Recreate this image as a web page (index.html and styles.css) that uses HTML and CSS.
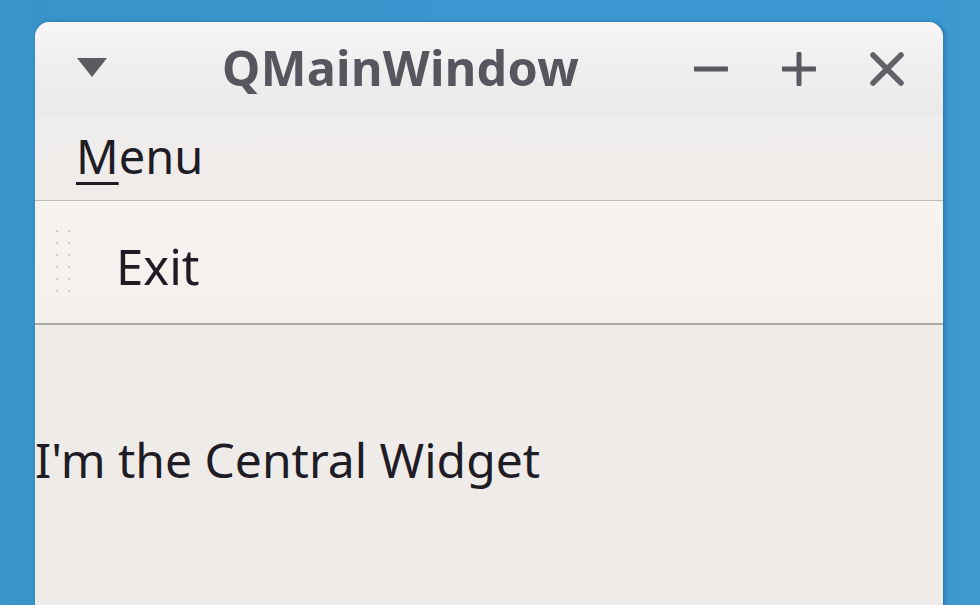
FILE: index.html
```html
<!DOCTYPE html>
<html>
<head>
<meta charset="utf-8">
<link rel="stylesheet" href="styles.css">
</head>
<body>
<div class="window">
  <div class="titlebar">
    <svg class="menu-arrow" width="30" height="19" viewBox="0 0 30 19"><path d="M0 0 H30 L15 19 Z" fill="#5b5a5f"/></svg>
    <div class="title">QMainWindow</div>
    <div class="buttons">
      <svg class="btn" width="34" height="34" viewBox="0 0 34 34"><path d="M1 17 H33" stroke="#5b5960" stroke-width="5" stroke-linecap="round"/></svg>
      <svg class="btn" width="34" height="34" viewBox="0 0 34 34"><path d="M1 17 H33 M17 2 V32" stroke="#5b5960" stroke-width="5" stroke-linecap="round"/></svg>
      <svg class="btn" width="34" height="34" viewBox="0 0 34 34"><path d="M3 3 L31 31 M31 3 L3 31" stroke="#636167" stroke-width="5.5" stroke-linecap="round"/></svg>
    </div>
  </div>
  <div class="menubar">
    <span class="menu-item"><span class="mnemonic">M</span>enu</span>
  </div>
  <div class="toolbar">
    <div class="handle">
      <i></i><i></i><i></i><i></i><i></i><i></i><i></i><i></i><i></i><i></i><i></i><i></i>
    </div>
    <span class="tool">Exit</span>
  </div>
  <div class="central">
    <span class="label">I'm the Central Widget</span>
  </div>
</div>
</body>
</html>
```

FILE: styles.css
```css
html, body {
  margin: 0;
  padding: 0;
  height: 100%;
  overflow: hidden;
}
body {
  background: linear-gradient(90deg, #3a96cb 0%, #3893c8 3%, #3a97cf 50%, #3b98d0 96%, #3e9bd0 100%);
  padding: 22px 37px 0 35px;
  box-sizing: border-box;
  font-family: "Noto Sans", "Open Sans", sans-serif;
  color: #1f1c26;
}
.window {
  height: 640px;
  background: #eeebe8;
  border-radius: 15px 15px 0 0;
  display: flex;
  flex-direction: column;
  overflow: hidden;
  box-shadow: 2px 0 4px rgba(20, 60, 100, 0.35);
}
.titlebar {
  height: 93px;
  display: flex;
  align-items: center;
  padding: 0 39px 0 42px;
  background: linear-gradient(180deg, #f7f5f5 0%, #eeedee 60%, #ebeaeb 100%);
}
.menu-arrow {
  flex: none;
  margin-top: -2px;
}
.title {
  flex: 1;
  text-align: center;
  font-weight: 700;
  font-size: 48.5px;
  color: #58555e;
  letter-spacing: 0.3px;
  margin-top: -3px;
}
.buttons {
  display: flex;
  gap: 54px;
  align-items: center;
  margin-top: 0;
}
.menubar {
  height: 85px;
  border-bottom: 1px solid #bcbab8;
  background: linear-gradient(180deg, #efedec 0%, #efece9 100%);
  display: flex;
  align-items: center;
  padding-left: 41px;
}
.menu-item {
  font-size: 47px;
  line-height: 1;
  margin-top: -3px;
}
.mnemonic {
  text-decoration: underline;
  text-decoration-thickness: 3px;
  text-underline-offset: 8px;
}
.toolbar {
  height: 122px;
  background: linear-gradient(180deg, #f6f3f0 0%, #f3f0ed 100%);
  border-bottom: 2px solid #a9a7a5;
  display: flex;
  align-items: center;
  padding-left: 21px;
}
.handle {
  display: grid;
  grid-template-columns: 2px 2px;
  column-gap: 10px;
  row-gap: 10px;
  margin-top: -2px;
}
.handle i {
  display: block;
  width: 2px;
  height: 2px;
  background: #cfcccb;
}
.tool {
  font-size: 49px;
  line-height: 1;
  margin-left: 46px;
  margin-top: 8px;
}
.central {
  flex: 1;
  background: #eeebe8;
  padding-top: 100px;
}
.label {
  font-size: 48px;
  line-height: 70px;
  display: block;
}
```
